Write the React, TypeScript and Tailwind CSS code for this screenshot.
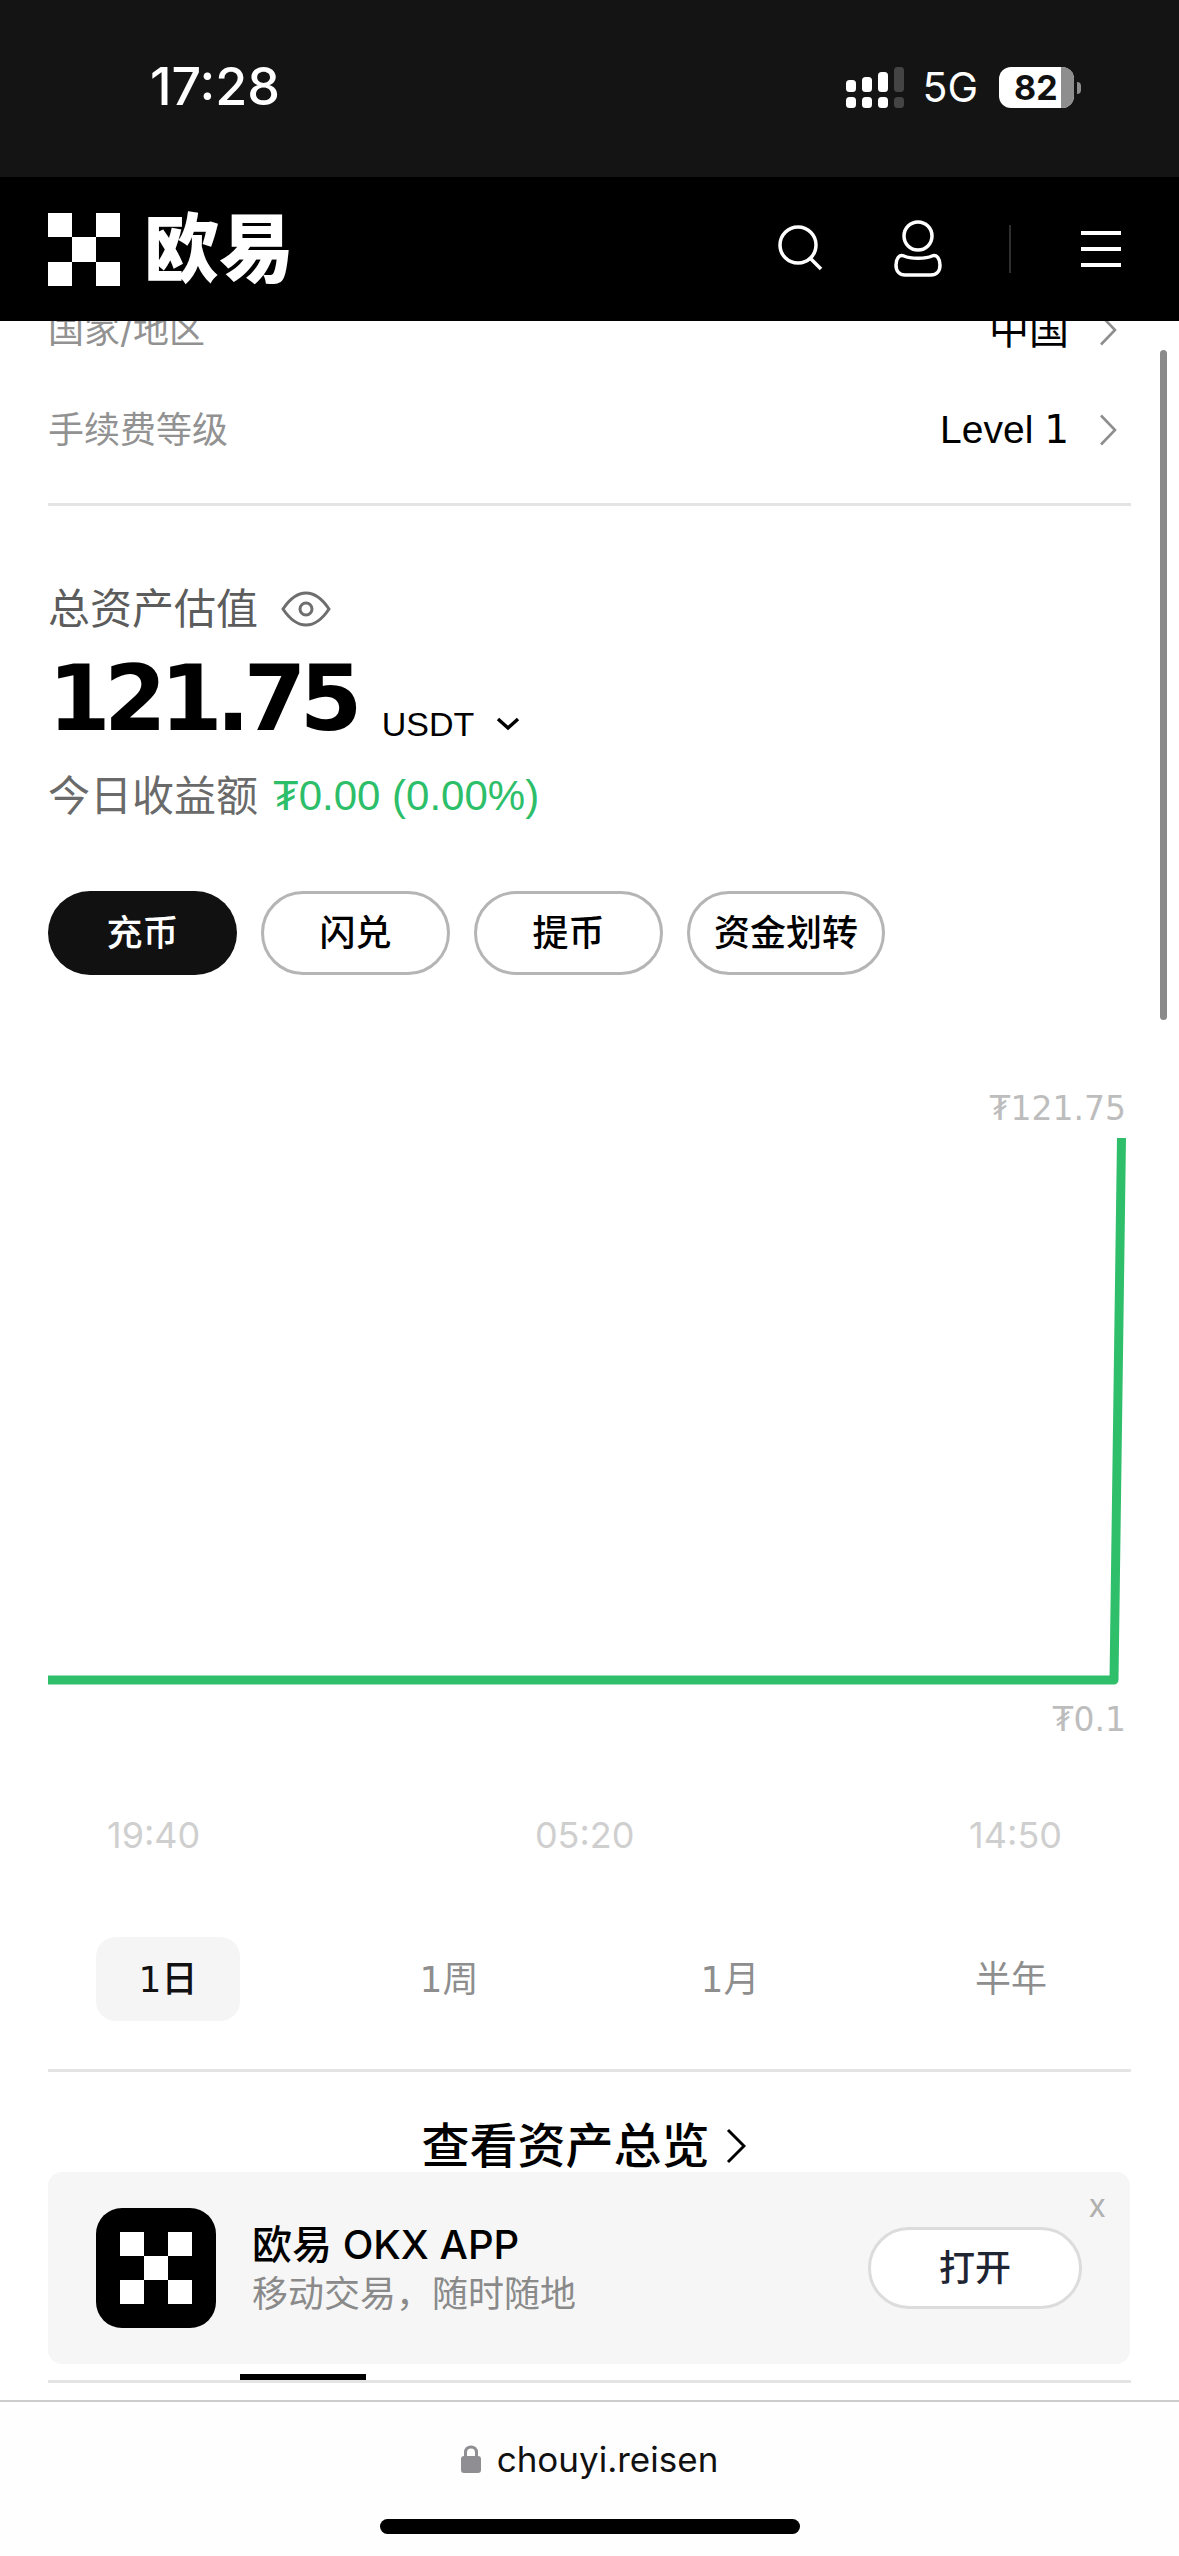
import React from "react";

const One = () => <span className="font-['DejaVu_Sans',sans-serif]">1</span>;

const Chevron = ({ className = "" }: { className?: string }) => (
  <svg width="18" height="32" viewBox="0 0 18 32" fill="none" className={className}>
    <path d="M2 1.5 L16 16 L2 30.5" stroke="currentColor" strokeWidth="2.6" />
  </svg>
);

const Signal = () => (
  <svg width="58" height="41" viewBox="0 0 58 41" className="block">
    <rect x="0" y="13" width="10" height="12" rx="3.5" fill="#fff" />
    <rect x="16" y="10" width="10" height="15" rx="3.5" fill="#fff" />
    <rect x="32" y="5" width="10" height="20" rx="3.5" fill="#fff" />
    <rect x="48" y="0" width="10" height="25" rx="3.5" fill="#444" />
    <rect x="0" y="30" width="10" height="11" rx="3.5" fill="#fff" />
    <rect x="16" y="30" width="10" height="11" rx="3.5" fill="#fff" />
    <rect x="32" y="30" width="10" height="11" rx="3.5" fill="#fff" />
    <rect x="48" y="30" width="10" height="11" rx="3.5" fill="#444" />
  </svg>
);

const Logo = ({ width, height, fill }: { width: number; height: number; fill: string }) => (
  <svg width={width} height={height} viewBox="0 0 3 3" preserveAspectRatio="none" className="block" shapeRendering="crispEdges">
    <g fill={fill}>
      <rect x="0" y="0" width="1" height="1" />
      <rect x="2" y="0" width="1" height="1" />
      <rect x="1" y="1" width="1" height="1" />
      <rect x="0" y="2" width="1" height="1" />
      <rect x="2" y="2" width="1" height="1" />
    </g>
  </svg>
);

const ActionButton = ({ label, dark }: { label: string; dark?: boolean }) => (
  <div
    className={
      dark
        ? "flex h-[84px] min-w-[189px] items-center justify-center rounded-[42px] bg-[#111111] px-[24px] text-[36px] font-medium text-white"
        : "flex h-[84px] min-w-[189px] items-center justify-center rounded-[42px] border-[3px] border-[#b5b5b5] bg-white px-[24px] text-[36px] font-medium text-black"
    }
  >
    {label}
  </div>
);

export default function App() {
  return (
    <div className="relative flex h-[2556px] w-[1179px] flex-col overflow-hidden bg-white font-[Inter,'Noto_Sans_CJK_SC',sans-serif]">
      {/* status bar */}
      <div className="flex h-[177px] shrink-0 items-start bg-[#141414] pl-[150px] pr-[98px] pt-[60px] text-white">
        <div className="text-[52px] font-medium leading-[54px]">17:28</div>
        <div className="ml-auto mt-[7px] flex items-center">
          <Signal />
          <div className="ml-[18px] text-[41px] leading-[41px]">5G</div>
          <div className="relative ml-[21px] flex h-[41px] w-[75px] items-center overflow-hidden rounded-[12px] bg-white pl-[15px]">
            <div className="text-[34px] font-bold leading-[41px] text-[#111]">82</div>
            <div className="absolute right-0 top-0 h-full w-[13px] bg-[#8e8e8e]" />
          </div>
          <div className="ml-[3px] h-[12px] w-[4px] rounded-r-[4px] bg-[#8e8e8e]" />
        </div>
      </div>

      {/* header */}
      <div className="relative z-10 flex h-[144px] shrink-0 items-center bg-black pl-[48px] text-white">
        <Logo width={72} height={73} fill="#fff" />
        <div className="ml-[24px] text-[75px] font-black leading-[78px]">欧易</div>
        <svg width="46" height="48" viewBox="0 0 46 48" fill="none" className="ml-[484px]">
          <circle cx="20" cy="20" r="18" stroke="#fff" strokeWidth="3.5" />
          <path d="M32 33 L43 44" stroke="#fff" strokeWidth="3.5" />
        </svg>
        <svg width="50" height="58" viewBox="0 0 50 58" fill="none" className="ml-[69px]">
          <circle cx="25" cy="16" r="14" stroke="#fff" strokeWidth="3.5" />
          <path
            d="M11 36 C17 39 33 39 39 36 C44 34 47 39 47 45 C47 52 43 55 38 55 L12 55 C7 55 3 52 3 45 C3 39 6 34 11 36 Z"
            stroke="#fff"
            strokeWidth="3.5"
          />
        </svg>
        <div className="ml-[66px] h-[48px] w-[2px] bg-[#2e2e2e]" />
        <div className="ml-[70px] flex w-[40px] flex-col gap-[12px]">
          <div className="h-[4px] bg-white" />
          <div className="h-[4px] bg-white" />
          <div className="h-[4px] bg-white" />
        </div>
      </div>

      {/* page */}
      <div className="relative min-h-0 flex-1 overflow-hidden">
        <div className="mt-[-41px] px-[48px]">
          <div className="flex h-[100px] items-center justify-between pr-[14px] text-[36px] text-[#929292]">
            <div>国家/地区</div>
            <div className="flex items-center text-[40px] text-black">
              中国
              <Chevron className="ml-[30px] text-[#8e8e8e]" />
            </div>
          </div>
          <div className="flex h-[100px] items-center justify-between pr-[14px] text-[36px] text-[#929292]">
            <div>手续费等级</div>
            <div className="flex items-center font-['Liberation_Sans',sans-serif] text-[39px] text-black">
              <span>
                Level <One />
              </span>
              <Chevron className="ml-[30px] text-[#8e8e8e]" />
            </div>
          </div>
          <div className="mt-[23px] h-[3px] bg-[#e4e4e4]" />

          <div className="mt-[77px] flex items-center text-[42px] leading-[52px] text-[#5c5c5c]">
            总资产估值
            <svg width="50" height="36" viewBox="0 0 50 36" fill="none" className="ml-[23px]">
              <path d="M2 18 C10 6 17 2 25 2 C33 2 40 6 48 18 C40 30 33 34 25 34 C17 34 10 30 2 18 Z" stroke="#6e6e6e" strokeWidth="3" />
              <circle cx="25" cy="18" r="6" stroke="#6e6e6e" strokeWidth="3" />
            </svg>
          </div>
          <div className="mt-[18px] flex items-end">
            <div className="font-['DejaVu_Sans',sans-serif] text-[90px] font-bold leading-[92px] tracking-[-6.6px] text-black">121.75</div>
            <div className="mb-[-1px] ml-[26px] font-['Liberation_Sans',sans-serif] text-[34px] leading-[44px] text-black">USDT</div>
            <svg width="24" height="14" viewBox="0 0 24 14" fill="none" className="mb-[14px] ml-[22px]">
              <path d="M2 2 L12 11 L22 2" stroke="#000" strokeWidth="3.5" />
            </svg>
          </div>
          <div className="mt-[25px] flex items-center text-[42px] leading-[52px] text-[#6a6a6a]">
            今日收益额
            <span className="ml-[15px] font-['Liberation_Sans',sans-serif] text-[42px] text-[#2dbe69]">₮0.00 (0.00%)</span>
          </div>

          <div className="mt-[69px] flex gap-[24px]">
            <ActionButton label="充币" dark />
            <ActionButton label="闪兑" />
            <ActionButton label="提币" />
            <ActionButton label="资金划转" />
          </div>
        </div>

        {/* chart */}
        <div className="mt-[114px] pr-[53px] text-right font-['DejaVu_Sans',sans-serif] text-[33px] leading-[40px] text-[#bdbdbd]">₮121.75</div>
        <svg width="1179" height="552" viewBox="0 0 1179 552" fill="none" className="mt-[5px] block">
          <path d="M48 546 L1114 546 L1121.5 4" stroke="#2fbf6a" strokeWidth="9" strokeLinejoin="round" />
        </svg>
        <div className="mt-[14px] pr-[53px] text-right font-['DejaVu_Sans',sans-serif] text-[33px] leading-[40px] text-[#bdbdbd]">₮0.1</div>
        <div className="mt-[73px] flex justify-between pl-[107px] pr-[117px] text-[36px] leading-[44px] text-[#cfcfcf]">
          <div>19:40</div>
          <div>05:20</div>
          <div>14:50</div>
        </div>

        {/* range tabs */}
        <div className="mt-[80px] flex justify-between px-[96px] text-[36px]">
          <div className="flex h-[84px] w-[144px] items-center justify-center rounded-[20px] bg-[#f5f5f5] font-medium text-[#111]">
            <span>
              <One />日
            </span>
          </div>
          <div className="flex h-[84px] w-[144px] items-center justify-center text-[#8e8e8e]">
            <span>
              <One />周
            </span>
          </div>
          <div className="flex h-[84px] w-[144px] items-center justify-center text-[#8e8e8e]">
            <span>
              <One />月
            </span>
          </div>
          <div className="flex h-[84px] w-[144px] items-center justify-center text-[#8e8e8e]">半年</div>
        </div>
        <div className="mx-[48px] mt-[48px] h-[3px] bg-[#e4e4e4]" />
        <div className="mt-[48px] flex items-center justify-center pr-[12px] text-[48px] font-medium leading-[52px] text-black">
          查看资产总览
          <svg width="20" height="36" viewBox="0 0 20 36" fill="none" className="ml-[16px]">
            <path d="M2 2 L18 18 L2 34" stroke="#000" strokeWidth="3" />
          </svg>
        </div>
        <div className="mx-[48px] mt-[202px] h-[9px] border-b-[3px] border-[#e4e4e4]">
          <div className="ml-[192px] h-[6px] w-[126px] bg-black" />
        </div>
      </div>

      {/* app banner */}
      <div className="absolute left-[48px] top-[2172px] flex h-[192px] w-[1082px] items-start rounded-[14px] bg-[#f6f6f6] pl-[48px] pt-[36px]">
        <div className="flex h-[120px] w-[120px] shrink-0 items-center justify-center rounded-[26px] bg-black">
          <Logo width={72} height={72} fill="#fff" />
        </div>
        <div className="ml-[36px] mt-[13px]">
          <div className="text-[40px] font-medium leading-[48px] text-black">欧易 OKX APP</div>
          <div className="mt-[3px] text-[36px] leading-[44px] text-[#8a8a8a]">移动交易，随时随地</div>
        </div>
        <div className="ml-auto mr-[48px] mt-[19px] flex h-[82px] w-[214px] items-center justify-center rounded-[41px] border-[3px] border-[#dcdcdc] bg-white text-[36px] font-medium text-[#1f2533]">打开</div>
        <div className="absolute right-[24px] top-[16px] text-[32px] leading-[36px] text-[#b0b0b0]">x</div>
      </div>

      {/* scrollbar */}
      <div className="absolute left-[1160px] top-[350px] h-[670px] w-[7px] rounded-full bg-[#8a8a8a]" />

      {/* browser bar */}
      <div className="flex h-[156px] shrink-0 flex-col items-center border-t-[2px] border-[#cccccc] bg-[#fefefe]">
        <div className="mt-[35px] flex items-center">
          <svg width="20" height="28" viewBox="0 0 20 28" fill="none">
            <path d="M4.5 13 V7.5 C4.5 4 6.8 2 10 2 C13.2 2 15.5 4 15.5 7.5 V13" stroke="#8e8e93" strokeWidth="3" />
            <rect x="0" y="11" width="20" height="17" rx="3" fill="#8e8e93" />
          </svg>
          <div className="ml-[16px] text-[35px] leading-[44px] text-[#111]">chouyi.reisen</div>
        </div>
        <div className="mt-[38px] h-[15px] w-[420px] rounded-full bg-black" />
      </div>
    </div>
  );
}
